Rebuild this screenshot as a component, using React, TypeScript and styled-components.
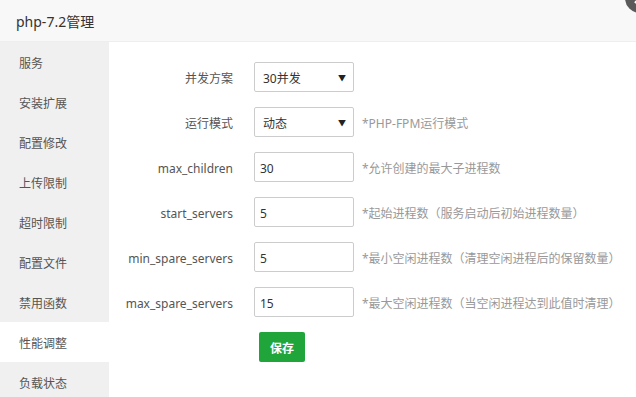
import React from "react";
import styled, { createGlobalStyle } from "styled-components";

const GlobalStyle = createGlobalStyle`
  html, body {
    margin: 0;
    padding: 0;
    background: #fff;
  }
  body {
    font-family: "Noto Sans", "Noto Sans CJK SC", sans-serif;
    font-size: 12px;
    color: #555;
  }
`;

const Layer = styled.div`
  position: relative;
  width: 636px;
  height: 397px;
  overflow: hidden;
  background: #fff;
`;

const Header = styled.div`
  height: 41px;
  line-height: 44px;
  padding-left: 16px;
  background: #f8f8f8;
  border-bottom: 1px solid #eee;
  font-size: 14px;
  color: #333;
`;

const CloseButton = styled.div`
  position: absolute;
  left: 625px;
  top: -17px;
  width: 30px;
  height: 30px;
  border-radius: 50%;
  background: #5a5a5a;
  display: flex;
  align-items: center;
  justify-content: center;
`;

const Body = styled.div`
  display: flex;
  height: 355px;
`;

const Sidebar = styled.ul`
  width: 109px;
  margin: 0;
  padding: 0;
  list-style: none;
  background: #f0f0f0;
`;

const NavItem = styled.li<{ $active?: boolean }>`
  height: 40px;
  line-height: 44px;
  padding-left: 19px;
  overflow: hidden;
  background: ${(p) => (p.$active ? "#fff" : "transparent")};
  color: #555;
`;

const Main = styled.div`
  flex: 1;
  padding-top: 20px;
  display: flex;
  flex-direction: column;
  gap: 15px;
`;

const Row = styled.div`
  display: flex;
  align-items: center;
  height: 30px;
`;

const Label = styled.span`
  width: 124px;
  margin-right: 21px;
  padding-top: 2px;
  text-align: right;
  color: #555;
`;

const SelectWrap = styled.div`
  position: relative;
  width: 100px;
  height: 30px;
`;

const Select = styled.select`
  appearance: none;
  width: 100px;
  height: 30px;
  box-sizing: border-box;
  border: 1px solid #ccc;
  border-radius: 2px;
  background: #fff;
  padding: 2px 0 0 8px;
  font: inherit;
  color: #333;
  outline: none;
`;

const Arrow = styled.span`
  position: absolute;
  right: 8px;
  top: 10px;
  font-size: 8px;
  color: #222;
  pointer-events: none;
`;

const Input = styled.input`
  width: 100px;
  height: 30px;
  box-sizing: border-box;
  border: 1px solid #ccc;
  border-radius: 2px;
  padding: 2px 5px 0;
  font: inherit;
  color: #333;
  outline: none;
`;

const Hint = styled.span`
  margin-left: 8px;
  padding-top: 2px;
  color: #999;
`;

const SaveButton = styled.button`
  margin-left: 150px;
  width: 46px;
  height: 30px;
  border: none;
  border-radius: 2px;
  background: #20a53a;
  color: #fff;
  font: inherit;
  font-weight: bold;
  padding: 2px 0 0;
`;

const navItems = [
  "服务",
  "安装扩展",
  "配置修改",
  "上传限制",
  "超时限制",
  "配置文件",
  "禁用函数",
  "性能调整",
  "负载状态",
];

const fields = [
  { name: "max_children", value: "30", hint: "*允许创建的最大子进程数" },
  { name: "start_servers", value: "5", hint: "*起始进程数（服务启动后初始进程数量）" },
  { name: "min_spare_servers", value: "5", hint: "*最小空闲进程数（清理空闲进程后的保留数量）" },
  { name: "max_spare_servers", value: "15", hint: "*最大空闲进程数（当空闲进程达到此值时清理）" },
];

export default function App() {
  return (
    <>
      <GlobalStyle />
      <Layer>
        <Header>php-7.2管理</Header>
        <CloseButton>
          <svg width="14" height="14" viewBox="0 0 14 14">
            <path d="M2 2L12 12M12 2L2 12" stroke="#fff" strokeWidth="2.4" />
          </svg>
        </CloseButton>
        <Body>
          <Sidebar>
            {navItems.map((item) => (
              <NavItem key={item} $active={item === "性能调整"}>
                {item}
              </NavItem>
            ))}
          </Sidebar>
          <Main>
            <Row>
              <Label>并发方案</Label>
              <SelectWrap>
                <Select defaultValue="30">
                  <option value="30">30并发</option>
                </Select>
                <Arrow>▼</Arrow>
              </SelectWrap>
            </Row>
            <Row>
              <Label>运行模式</Label>
              <SelectWrap>
                <Select defaultValue="dynamic">
                  <option value="dynamic">动态</option>
                </Select>
                <Arrow>▼</Arrow>
              </SelectWrap>
              <Hint>*PHP-FPM运行模式</Hint>
            </Row>
            {fields.map((f) => (
              <Row key={f.name}>
                <Label>{f.name}</Label>
                <Input defaultValue={f.value} />
                <Hint>{f.hint}</Hint>
              </Row>
            ))}
            <Row>
              <SaveButton>保存</SaveButton>
            </Row>
          </Main>
        </Body>
      </Layer>
    </>
  );
}
